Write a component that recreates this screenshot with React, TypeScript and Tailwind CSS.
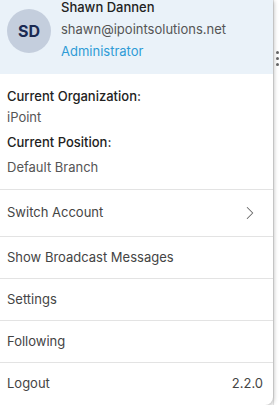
import { ChevronRight } from "lucide-react"

const MENU_ITEMS = [
  { label: "Show Broadcast Messages" },
  { label: "Settings" },
  { label: "Following" },
]

const UserMenu = () => {
  return (
    <div className="relative z-10 flex w-[273px] shrink-0 flex-col overflow-hidden rounded-br-[8px] bg-white shadow-[1px_1px_4px_rgba(0,0,0,0.25)]">
      <div className="flex h-[74px] items-start gap-[10px] bg-[#eaf2f9] pl-[7px] pt-[9px]">
        <div className="flex h-[44px] w-[44px] shrink-0 items-center justify-center rounded-full bg-[#c4cedd] text-[16px] font-bold text-[#1b2a52]">
          SD
        </div>
        <div className="-mt-[13px] flex flex-col text-[13px] leading-[22px]">
          <span className="font-medium text-[#222]">Shawn Dannen</span>
          <span className="text-[#555]">shawn@ipointsolutions.net</span>
          <span className="text-[#2e9bd6]">Administrator</span>
        </div>
      </div>

      <div className="flex flex-col px-[7px] pb-[11px] pt-[12px] text-[13px]">
        <span className="font-medium leading-[20px] text-[#222]">Current Organization:</span>
        <span className="leading-[22px] text-[#555]">iPoint</span>
        <span className="mt-[4px] font-medium leading-[20px] text-[#222]">Current Position:</span>
        <span className="mt-[4px] leading-[22px] text-[#555]">Default Branch</span>
      </div>

      <div className="flex h-[47px] items-center justify-between border-t border-[#e3e3e3] pl-[7px] pr-[12px] text-[13px] text-[#444]">
        <span>Switch Account</span>
        <ChevronRight size={22} strokeWidth={1.1} className="text-[#666]" />
      </div>

      {MENU_ITEMS.map((item) => (
        <div
          key={item.label}
          className="flex h-[42px] items-center border-t border-[#e3e3e3] px-[7px] text-[13px] text-[#444]"
        >
          {item.label}
        </div>
      ))}

      <div className="flex h-[42px] items-center justify-between border-t border-[#e3e3e3] pl-[7px] pr-[10px] text-[13px] text-[#444]">
        <span>Logout</span>
        <span>2.2.0</span>
      </div>
    </div>
  )
}

export default function App() {
  return (
    <div
      className="flex h-[405px] w-[280px] overflow-hidden bg-[#fafafa]"
      style={{ fontFamily: "Inter, 'Liberation Sans', sans-serif" }}
    >
      <UserMenu />
      <div className="flex flex-1 flex-col items-center border-l border-[#e6e6e6] bg-white pt-[51px]">
        <div className="flex flex-col gap-[3px]">
          <span className="h-[3px] w-[3px] rounded-full bg-[#666]" />
          <span className="h-[3px] w-[3px] rounded-full bg-[#666]" />
          <span className="h-[3px] w-[3px] rounded-full bg-[#666]" />
        </div>
      </div>
    </div>
  )
}
